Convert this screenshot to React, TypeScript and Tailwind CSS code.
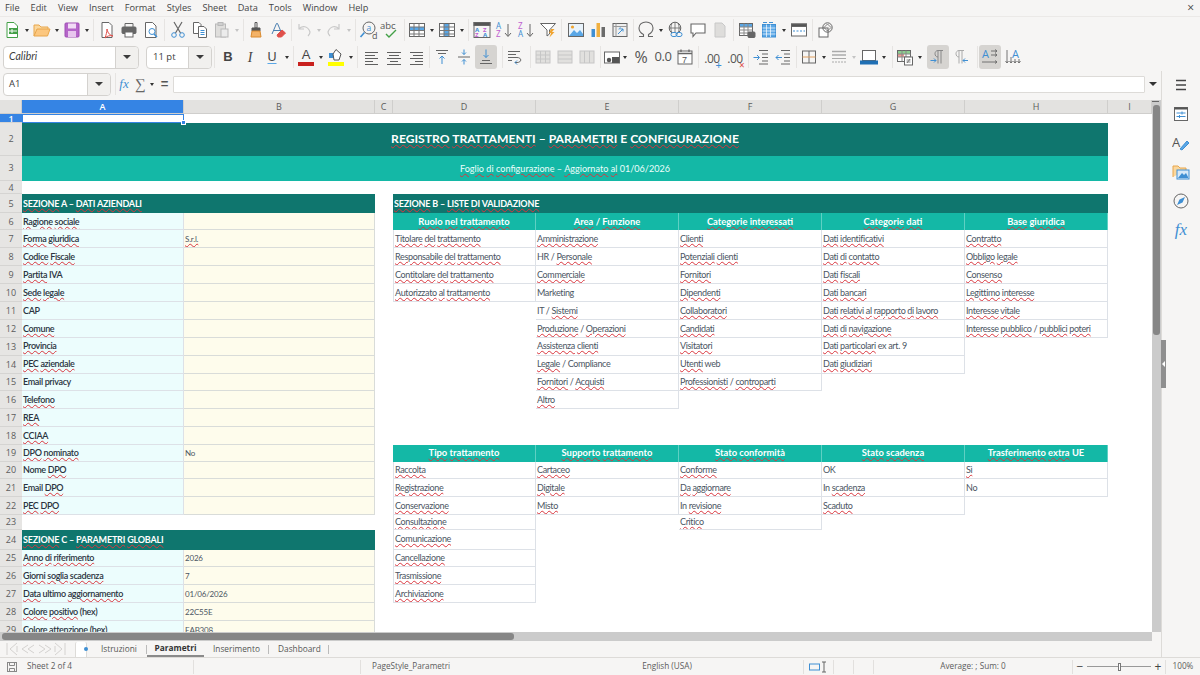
import React from "react";

const ui = "font-['Open_Sans','Noto_Sans',sans-serif]";
const sheetFont = "font-['Lato','Liberation_Sans',sans-serif]";

const NOSPELL = new Set(["HR","IT","/","Marketing","web","Compliance","ex","art.","9","–","A","B","C","E","UE","In","Email","privacy","CAP","IVA","Nome","OK","No","01/06/2026","(hex)","ultimo","2026","7","22C55E","EAB308"]);

function T({ s }: { s: string }) {
  const parts = s.split(" ");
  return (
    <span className="whitespace-nowrap">
      {parts.map((w, i) => (
        <React.Fragment key={i}>
          {NOSPELL.has(w) ? <span>{w}</span> : <span className="underline decoration-wavy decoration-[#d9363e] decoration-[0.5px] underline-offset-[1px]">{w}</span>}
          {i < parts.length - 1 ? " " : ""}
        </React.Fragment>
      ))}
    </span>
  );
}

const Sv = ({ children, w = 18, h = 18 }: { children: React.ReactNode; w?: number; h?: number }) => (
  <svg width={w} height={h} viewBox={`0 0 ${w} ${h}`} fill="none" stroke="#666" strokeWidth="1">{children}</svg>
);

const Btn = ({ children, active }: { children?: React.ReactNode; active?: boolean }) => (
  <div className={`w-[22px] h-[24px] shrink-0 flex items-center justify-center rounded-[3px] ${active ? "bg-[#d6d4d1]" : ""}`}>{children}</div>
);
const Dd = ({ faint }: { faint?: boolean }) => (
  <div className="w-[8px] shrink-0 flex items-center justify-center">
    <div className={`w-0 h-0 border-x-[2.5px] border-x-transparent border-t-[3px] ${faint ? "border-t-[#c4c4c4]" : "border-t-[#333]"}`} />
  </div>
);
const Sep = () => (
  <div className="w-[4px] h-[22px] shrink-0 flex justify-center"><div className="w-px h-full bg-[#e6e4e2]" /></div>
);
const Gap = ({ w }: { w: "1" | "2" | "3" }) => (
  <div className={`shrink-0 ${w === "1" ? "w-[1px]" : w === "2" ? "w-[2px]" : "w-[3px]"}`} />
);

const Lines = ({ xs, c = "#666" }: { xs: [number, number][]; c?: string }) => (
  <g stroke={c}>{xs.map(([a, b], i) => <path key={i} d={`M${a} ${4 + i * 3}.5H${b}`} />)}</g>
);

const Grid = ({ head, col, light }: { head?: boolean; col?: boolean; light?: boolean }) => (
  <Sv>
    <rect x="1.5" y="2.5" width="15" height="13" stroke={light ? "#bdbdbd" : "#666"} fill={light ? "#e2e1df" : "#fff"} />
    {head && <rect x="2" y="6" width="14" height="3.5" fill="#5aa7e6" stroke="none" />}
    {col && <rect x="6" y="3" width="5" height="12" fill="#5aa7e6" stroke="none" />}
    <path d="M1.5 6H16.5M1.5 9.5H16.5M1.5 13H16.5M6 2.5V15.5M11 2.5V15.5" stroke={light ? "#bdbdbd" : "#777"} />
  </Sv>
);

function Toolbar1() {
  return (
    <div className="h-[26px] flex items-center pl-[1px]">
      <Btn><Sv><path d="M4 1.5H11L14.5 5V16.5H4Z" stroke="#43a047" fill="#fff" /><rect x="6" y="7" width="8" height="6" fill="#43a047" stroke="none" /><path d="M9 8V12M6 10H14" stroke="#fff" /></Sv></Btn><Dd />
      <Btn><Sv w={20}><path d="M2 15V4H7L9 6H16V8" stroke="#e8a64c" fill="#fbd79c" /><path d="M2 15L5 8H18L15.5 15Z" stroke="#e8a64c" fill="#fcc77f" /></Sv></Btn><Dd />
      <Btn><Sv><rect x="2" y="2" width="14" height="14" rx="1" fill="#b565c9" stroke="#a04fb5" /><rect x="5" y="2.5" width="8" height="5" fill="#f2dcf6" stroke="none" /><rect x="5" y="10" width="8" height="6" fill="#e8c6ee" stroke="none" /></Sv></Btn><Dd />
      <Sep /><Gap w="1" />
      <Btn><Sv><path d="M4 1.5H11L14 4.5V16.5H4Z" fill="#fff" /><path d="M9 8C10 13 12 14 15 15C12 14 9 15 7 17C8 14 9 11 9 8Z" stroke="#e0504a" /></Sv></Btn>
      <Btn><Sv><path d="M5 6V2.5H13V6" /><rect x="2" y="6" width="14" height="6.5" rx="1" fill="#666" /><rect x="5" y="11" width="8" height="5" fill="#fff" /></Sv></Btn>
      <Btn><Sv><path d="M3.5 1.5H10.5L14 5V16.5H3.5Z" fill="#fff" /><circle cx="10" cy="10.5" r="3" stroke="#3f8fd3" /><path d="M12 13L15 16" stroke="#3f8fd3" strokeWidth="1.5" /></Sv></Btn>
      <Sep /><Gap w="1" />
      <Btn><Sv><path d="M5 1L11.5 12M13 1L6.5 12" strokeWidth="1.2" /><circle cx="5" cy="14" r="2.3" stroke="#3f8fd3" /><circle cx="13" cy="14" r="2.3" stroke="#3f8fd3" /></Sv></Btn>
      <Btn><Sv><path d="M2.5 1.5H8L10 3.5V12.5H2.5Z" fill="#fff" /><path d="M7.5 5.5H13L15.5 8V16.5H7.5Z" fill="#fff" /><path d="M9.5 9.5H13.5M9.5 11.5H13.5M9.5 13.5H13.5" stroke="#3f8fd3" /></Sv></Btn>
      <Btn><Sv><rect x="2.5" y="3" width="10" height="13" fill="#dfdedc" stroke="#b9b9b9" /><rect x="5" y="1.5" width="5" height="3" fill="#cfcfcf" stroke="#b9b9b9" /><rect x="8" y="8" width="7" height="8" fill="#ececec" stroke="#b9b9b9" /></Sv></Btn><Dd faint />
      <Sep />
      <Btn><Sv><path d="M8 1.5H10V7H8Z" stroke="#555" /><path d="M5 7H13V10H5Z" fill="#555" stroke="#555" /><path d="M5 10H13L14 16H4Z" fill="#f3b267" stroke="#d98a2f" /></Sv></Btn>
      <Btn><Sv><path d="M3 13L7.5 2.5H8.5L13 13M5 9.5H11" stroke="#4a7fb0" /><path d="M8 14L13 9L16.5 12L12.5 16H9Z" fill="#e0504a" stroke="#e0504a" /></Sv></Btn>
      <Sep />
      <Btn><Sv><path d="M4 3V8H9M4 8C7 4 13 5 15 11C15 13 14 14 13 15" stroke="#c8c8c8" strokeWidth="1.2" /></Sv></Btn><Dd faint />
      <Btn><Sv><path d="M14 3V8H9M14 8C11 4 5 5 3 11C3 13 4 14 5 15" stroke="#c8c8c8" strokeWidth="1.2" /></Sv></Btn><Dd faint />
      <Sep /><Gap w="1" />
      <Btn><Sv w={20} h={20}><circle cx="10" cy="8" r="6" stroke="#666" /><path d="M5.5 12.5L1.5 17" stroke="#3f8fd3" strokeWidth="1.6" /><text x="7.5" y="11" fontSize="8.5" fill="#3f8fd3" stroke="none" fontFamily="Open Sans">a</text><text x="13" y="18.5" fontSize="9" fill="#555" stroke="none" fontFamily="Open Sans">d</text></Sv></Btn>
      <Btn><Sv w={22} h={20}><text x="0" y="9" fontSize="9.5" fill="#555" stroke="none" fontFamily="Open Sans">abc</text><path d="M6 14L9 17L16 10" stroke="#43a047" strokeWidth="1.4" /></Sv></Btn>
      <Sep />
      <Btn><Grid head /></Btn><Dd />
      <Btn><Grid col /></Btn><Dd />
      <Sep /><Gap w="1" />
      <Btn><Sv><rect x="1" y="1.5" width="16" height="15" /><rect x="1" y="1.5" width="16" height="3" fill="#555" /><text x="2" y="10.5" fontSize="6" fill="#3f8fd3" stroke="none" fontWeight="700">A</text><text x="2" y="16" fontSize="6" fill="#c060d0" stroke="none" fontWeight="700">Z</text><text x="10" y="10.5" fontSize="6" fill="#c060d0" stroke="none" fontWeight="700">Z</text><text x="10" y="16" fontSize="6" fill="#3f8fd3" stroke="none" fontWeight="700">A</text></Sv></Btn>
      <Btn><Sv><text x="1" y="8" fontSize="8" fill="#3f8fd3" stroke="none">A</text><text x="1" y="16" fontSize="8" fill="#c060d0" stroke="none">Z</text><path d="M13 3V15M10 12L13 15.5L16 12" /></Sv></Btn>
      <Btn><Sv><text x="1" y="8" fontSize="8" fill="#c060d0" stroke="none">Z</text><text x="1" y="16" fontSize="8" fill="#3f8fd3" stroke="none">A</text><path d="M13 3V15M10 12L13 15.5L16 12" /></Sv></Btn>
      <Btn><Sv><path d="M1.5 2.5H16.5L10.5 9V13L8 15V9Z" fill="#fff" /><path d="M12 8L15.5 8L13 11H15.5L10.5 16.5L12 12H10Z" fill="#f0a430" stroke="none" /></Sv></Btn>
      <Sep /><Gap w="2" />
      <Btn><Sv><rect x="1.5" y="2.5" width="15" height="13" fill="#e9f3fb" /><circle cx="5.5" cy="6" r="1.6" fill="#f0a430" stroke="none" /><path d="M2 15L7 9L10 12L13 9L16 13V15Z" fill="#5aa7e6" stroke="none" /></Sv></Btn>
      <Btn><Sv><rect x="2.5" y="8" width="3.5" height="8" fill="#3f8fd3" stroke="none" /><rect x="7.5" y="2" width="3.5" height="14" fill="#f0b040" stroke="none" /><rect x="12.5" y="6" width="3.5" height="10" fill="#6b6b6b" stroke="none" /></Sv></Btn>
      <Btn><Sv><rect x="2" y="2.5" width="14" height="13" fill="#efefef" /><path d="M2 5.5H16M5 2.5V15.5" stroke="#999" /><path d="M7 13L12 8M12 8H9.5M12 8V10.5M8 8.5C8 7 9 7 10 7" stroke="#3f8fd3" /></Sv></Btn>
      <Sep />
      <Btn><Sv w={20} h={20}><path d="M3 16.5H7.5V14.5C4.5 13 3 10.5 3 8C3 4.5 6 2 10 2C14 2 17 4.5 17 8C17 10.5 15.5 13 12.5 14.5V16.5H17" strokeWidth="1.1" /></Sv></Btn><Dd />
      <Btn><Sv><circle cx="8" cy="7" r="5.8" /><path d="M2.2 7H13.8M8 1.2V12.8M5 2C3.5 6 3.5 8 5 12M11 2C12.5 6 12.5 8 11 12" strokeWidth="0.8" /><rect x="4" y="11.5" width="6" height="4" rx="2" stroke="#3f8fd3" fill="#f6f5f4" /><rect x="9" y="11.5" width="6" height="4" rx="2" stroke="#3f8fd3" /></Sv></Btn>
      <Btn><Sv><path d="M2 3H16V12H7L4 15.5V12H2Z" fill="#fff" strokeWidth="1.1" /></Sv></Btn>
      <Btn><Sv><path d="M4 2H11L14 5V16H4Z" fill="#dedddb" stroke="#c8c8c8" /></Sv></Btn>
      <Sep /><Gap w="1" />
      <Btn><Sv><rect x="1.5" y="2.5" width="13" height="12" fill="#fff" /><rect x="2" y="3" width="12" height="3" fill="#5aa7e6" stroke="none" /><path d="M1.5 6H14.5M1.5 9H14.5M1.5 12H14.5M6 2.5V14.5M10 2.5V14.5" stroke="#888" /><rect x="10" y="11" width="7" height="5.5" rx="1" fill="#666" /></Sv></Btn>
      <Btn><Sv><rect x="2.5" y="3.5" width="13" height="12.5" fill="#5aa7e6" stroke="#3f8fd3" /><path d="M2.5 7H15.5M2.5 10H15.5M2.5 13H15.5M6.5 3.5V16M10.5 3.5V16" stroke="#fff" strokeWidth=".7" /><path d="M3 1.5H7M9 1.5H13" stroke="#3f8fd3" /></Sv></Btn><Dd />
      <Btn><Sv><rect x="1.5" y="3" width="15" height="12" fill="#fff" /><rect x="1.5" y="3" width="15" height="2.5" fill="#555" /><path d="M3 10H15" stroke="#3f8fd3" strokeDasharray="2 1.5" /></Sv></Btn>
      <Sep /><Gap w="1" />
      <Btn><Sv><rect x="2" y="7" width="9" height="9" fill="#fff" /><circle cx="10.5" cy="6.5" r="4.7" /><path d="M10.5 3L14 6.5L10.5 10L7 6.5Z" strokeWidth=".8" /></Sv></Btn>
    </div>
  );
}

const ComboBtn = () => (
  <div className="w-[23px] self-stretch bg-[#f1f0ee] border-l border-[#d4d2cf] rounded-r-[4px] flex items-center justify-center">
    <div className="w-0 h-0 border-x-[4px] border-x-transparent border-t-[4.5px] border-t-[#3b3b3b]" />
  </div>
);

const AlignIcon = ({ xs }: { xs: [number, number][] }) => (
  <Sv><Lines xs={xs} c="#5f5f5f" /></Sv>
);

const Cell3 = ({ v, h }: { v?: boolean; h?: boolean }) => (
  <Sv><rect x="2" y="3" width="14" height="12" fill="#e1e0de" stroke="#c6c6c6" /><path d={`${h ? "M2 7H16M2 11H16" : ""}${v ? "M6.5 3V15M11.5 3V15" : ""}`} stroke="#c6c6c6" /></Sv>
);

function Toolbar2() {
  return (
    <div className="h-[28px] flex items-center">
      <div className="w-[3px] shrink-0" />
      <div className={`w-[136px] h-[23px] shrink-0 bg-white border border-[#d4d2cf] rounded-[4px] flex items-center ${sheetFont}`}>
        <div className="flex-1 pl-[5px] text-[10.5px] italic text-[#3d3d3d]">Calibri</div><ComboBtn />
      </div>
      <div className="w-[7px] shrink-0" />
      <div className={`w-[66px] h-[23px] shrink-0 bg-white border border-[#d4d2cf] rounded-[4px] flex items-center ${ui}`}>
        <div className="flex-1 pl-[6px] text-[9.5px] text-[#3d3d3d]">11 pt</div><ComboBtn />
      </div>
      <Sep /><Gap w="1" />
      <Btn><span className="font-['Liberation_Sans'] font-bold text-[13px] text-[#444]">B</span></Btn>
      <Btn><span className="font-['Liberation_Serif'] italic text-[14px] text-[#444]">I</span></Btn>
      <Btn><span className="font-['Liberation_Sans'] text-[12.5px] text-[#444] underline decoration-[#5aa7e6] underline-offset-2">U</span></Btn><Dd />
      <Sep />
      <Btn><div className="flex flex-col items-center"><span className="font-['Liberation_Sans'] text-[13px] leading-[12px] text-[#444]">A</span><div className="w-[16px] h-[4px] mt-[1px] bg-[#c9211e]" /></div></Btn><Dd />
      <Btn><Sv><rect x="1" y="14" width="16" height="4" fill="#ffff00" stroke="none" /><path d="M2 5H7V10H2Z" fill="#3f8fd3" stroke="none" /><path d="M6 6L9 1.5L14 6L12 12H7Z" fill="#fff" stroke="#555" /></Sv></Btn><Dd />
      <Sep /><Gap w="2" />
      <Btn><AlignIcon xs={[[2,15],[2,12],[2,15],[2,10],[2,15]]} /></Btn>
      <Btn><AlignIcon xs={[[2,16],[4,14],[2,16],[5,13],[2,16]]} /></Btn>
      <Btn><AlignIcon xs={[[3,16],[6,16],[3,16],[8,16],[3,16]]} /></Btn>
      <Sep />
      <Btn><Sv><path d="M3 2.5H15M5 5.5H13" /><path d="M9 16V8M6.5 10.5L9 8L11.5 10.5" stroke="#3f8fd3" /></Sv></Btn>
      <Btn><Sv><path d="M3 9H15" /><path d="M9 1.5V6.5M7 4.5L9 6.5L11 4.5M9 16.5V11.5M7 13.5L9 11.5L11 13.5" stroke="#3f8fd3" /></Sv></Btn>
      <Btn active><Sv><path d="M9 1.5V9.5M6.5 7L9 9.5L11.5 7" stroke="#3f8fd3" /><path d="M5 12.5H13M3 15.5H15" /></Sv></Btn>
      <Gap w="3" /><Sep />
      <Btn><Sv><path d="M2 3.5H14M2 6.5H10M2 9.5H11C16 9.5 16 14.5 11 14.5H9M2 12.5H6" /><path d="M11 12.5L9 14.5L11 16.5" stroke="#3f8fd3" /></Sv></Btn>
      <Gap w="2" /><Sep />
      <Btn><Cell3 h v /></Btn>
      <Btn><Cell3 h /></Btn>
      <Btn><Cell3 v /></Btn>
      <Sep />
      <div className="w-[19px] shrink-0 flex justify-center"><Sv w={18}><rect x="1.5" y="4" width="15" height="11" fill="#fff" /><circle cx="6" cy="12" r="2.2" fill="#555" stroke="none" /><rect x="9" y="9" width="7" height="6" fill="#555" stroke="none" /></Sv></div><Dd />
      <Gap w="1" />
      <Btn><span className={`${ui} text-[16px] text-[#555]`}>%</span></Btn>
      <Btn><span className={`${ui} text-[13px] tracking-[-0.5px] text-[#555]`}>0.0</span></Btn>
      <Btn><Sv><rect x="2" y="3" width="14" height="13" fill="#fff" /><path d="M2 5.5H16M5 1.5V4M13 1.5V4" strokeWidth="1.3" /><text x="6" y="14.5" fontSize="9" fill="#555" stroke="none" fontFamily="Liberation Sans">7</text></Sv></Btn>
      <Sep /><Gap w="1" />
      <Btn><span className="relative"><span className={`${ui} text-[12px] tracking-[-0.5px] text-[#555]`}>.00</span><span className="absolute -right-[2px] bottom-0 text-[11px] leading-[8px] text-[#3f8fd3]">+</span></span></Btn>
      <Gap w="1" />
      <Btn><span className="relative"><span className={`${ui} text-[12px] tracking-[-0.5px] text-[#555]`}>.00</span><span className="absolute -right-[2px] bottom-0 text-[10px] leading-[8px] text-[#e0504a]">×</span></span></Btn>
      <Sep />
      <Btn><Sv><path d="M7 2.5H16M10 6H16M10 9.5H16M10 13H16M7 16H16" /><path d="M1.5 9.5H7M5 7L7.5 9.5L5 12" stroke="#3f8fd3" /></Sv></Btn>
      <Btn><Sv><path d="M7 2.5H16M10 6H16M10 9.5H16M10 13H16M7 16H16" /><path d="M8 9.5H2M4.5 7L2 9.5L4.5 12" stroke="#3f8fd3" /></Sv></Btn>
      <Sep />
      <Btn><Sv><rect x="2.5" y="3" width="13" height="12" /><path d="M9 3V15" /><path d="M2.5 9H15.5" stroke="#e0a060" /></Sv></Btn><Dd />
      <Btn><Sv><path d="M2 3.5H16M2 7H16" stroke="#aaa" strokeWidth="1.4" /><path d="M2 10.5H16" stroke="#aaa" /><path d="M2 14H16" stroke="#aaa" strokeDasharray="2 1" /></Sv></Btn><Dd faint />
      <Btn><Sv w={20}><rect x="3.5" y="2.5" width="13" height="10" fill="#fff" /><rect x="1" y="12.5" width="18" height="4" fill="#1f6fb4" stroke="none" /></Sv></Btn><Dd />
      <Gap w="2" /><Sep />
      <Btn><Sv><rect x="1.5" y="2.5" width="13" height="11" fill="#fff" /><rect x="2" y="3" width="12" height="3" fill="#8ccf90" stroke="none" /><rect x="2" y="6" width="6" height="3" fill="#ef9a94" stroke="none" /><path d="M1.5 6H14.5M1.5 9H14.5M6 2.5V13.5M10 2.5V13.5" stroke="#888" /><rect x="8.5" y="9" width="8" height="8" fill="#fff" /><path d="M10.5 12H14.5M10.5 14H14.5M11 15L14 11" strokeWidth=".8" /></Sv></Btn><Dd />
      <Gap w="3" />
      <Btn active><Sv><path d="M9 15.5V2.5H14M12 15.5V2.5M9 2.5C5 2.5 5 9 9 9" stroke="#888" /><path d="M1.5 12.5H7M5 10.5L7 12.5L5 14.5" stroke="#3f8fd3" /></Sv></Btn>
      <Gap w="1" />
      <Btn><Sv><path d="M7 15.5V2.5H12M10 15.5V2.5M7 2.5C3 2.5 3 9 7 9" stroke="#aaa" /><path d="M16 12.5H11M13 10.5L11 12.5L13 14.5" stroke="#3f8fd3" /></Sv></Btn>
      <Gap w="3" /><Sep />
      <Btn active><Sv><text x="1" y="10" fontSize="11" fill="#3f8fd3" stroke="none" fontFamily="Open Sans">A</text><path d="M10 3H16M14 1.5L16 3L14 4.5M10 7H16M14 5.5L16 7L14 8.5M1 14H16M14 12.5L16 14L14 15.5" strokeWidth=".9" /></Sv></Btn>
      <Gap w="1" />
      <Btn><Sv><text x="8" y="10" fontSize="11" fill="#3f8fd3" stroke="none" fontFamily="Open Sans">A</text><path d="M3 2V15M1.5 13L3 15L4.5 13M7 9V15M5.5 13L7 15L8.5 13M11 11V15M9.5 13L11 15L12.5 13M15 11V15M13.5 13L15 15L16.5 13" strokeWidth=".9" /></Sv></Btn>
    </div>
  );
}

function FormulaBar() {
  return (
    <div className="h-[29px] pb-[3px] flex items-center">
      <div className="w-[3px] shrink-0" />
      <div className={`w-[108px] h-[23px] shrink-0 bg-white border border-[#d4d2cf] rounded-[4px] flex items-center ${ui}`}>
        <div className="flex-1 pl-[5px] text-[9.5px] text-[#3d3d3d]">A1</div><ComboBtn />
      </div>
      <div className="w-[2px] shrink-0" /><Sep />
      <div className="w-[14px] flex justify-center shrink-0"><span className="font-['Liberation_Serif'] italic text-[13px] text-[#3f8fd3]">fx</span></div>
      <div className="w-[4px] shrink-0" />
      <div className="w-[10px] flex justify-center shrink-0"><span className="font-['Liberation_Serif'] text-[15px] text-[#666]">∑</span></div>
      <div className="w-[3px] shrink-0" />
      <Dd />
      <div className="w-[17px] flex justify-center shrink-0"><span className="font-['Liberation_Sans'] text-[13px] font-bold text-[#555]">=</span></div>
      <div className="w-[972px] h-[17px] shrink-0 bg-white border border-[#dddbd8] rounded-[1px]" />
      <div className="flex-1 flex justify-center">
        <div className="w-0 h-0 border-x-[4px] border-x-transparent border-t-[4.5px] border-t-[#333]" />
      </div>
    </div>
  );
}

const RH = ({ n, sel }: { n: number; sel?: boolean }) => (
  <div className={`${ui} flex items-center justify-center text-[9px] leading-none border-b border-[#d5d4d2] overflow-hidden ${sel ? "bg-[#3584e4] text-white font-semibold" : "bg-[#e6e5e3] text-[#5c5c5c]"}`}>{n}</div>
);
const CH = ({ t, sel }: { t: string; sel?: boolean }) => (
  <div className={`${ui} flex items-center justify-center text-[9px] leading-none border-r border-b border-[#cfcecc] ${sel ? "bg-[#3584e4] text-white font-semibold" : "bg-[#e3e2e0] text-[#5c5c5c]"}`}>{t}</div>
);

const border = "border-r border-b border-[#dde1e7]";
const Blank = () => <div />;
const Label = ({ t }: { t?: string }) => (
  <div className={`bg-[#ecfdfd] ${border} pl-[1px] flex items-center overflow-hidden text-[9px] tracking-[-0.35px] font-semibold text-[#2a3340] ${sheetFont}`}>{t && <T s={t} />}</div>
);
const Value = ({ t }: { t?: string }) => (
  <div className={`bg-[#fefcec] border-r border-b border-[#d9dcd9] pl-[1px] flex items-center overflow-hidden text-[8px] tracking-[-0.2px] text-[#4b5563] ${sheetFont}`}>{t && <T s={t} />}</div>
);
const Sec = ({ t, span5 }: { t: string; span5?: boolean }) => (
  <div className={`${span5 ? "col-span-5" : "col-span-2"} bg-[#0f766e] pl-[1px] flex items-center text-[9px] font-bold tracking-[-0.2px] text-white ${sheetFont}`}><T s={t} /></div>
);
const Head = ({ t }: { t: string }) => (
  <div className={`bg-[#14b8a6] border-r border-[#5fd0c3] flex items-center justify-center text-[9.4px] font-bold text-white ${sheetFont}`}><T s={t} /></div>
);
const Item = ({ t, left }: { t: string; left?: boolean }) => (
  <div className={`bg-white ${border} ${left ? "border-l" : ""} pl-[1px] flex items-center overflow-hidden text-[9px] tracking-[-0.35px] text-[#4b5563] ${sheetFont}`}><T s={t} /></div>
);

type Row = { n: number; a?: string; b?: string; cols?: (string | undefined)[] };

const rowsA: Row[] = [
  { n: 7, a: "Forma giuridica", b: "S.r.l.", cols: ["Titolare del trattamento", "Amministrazione", "Clienti", "Dati identificativi", "Contratto"] },
  { n: 8, a: "Codice Fiscale", cols: ["Responsabile del trattamento", "HR / Personale", "Potenziali clienti", "Dati di contatto", "Obbligo legale"] },
  { n: 9, a: "Partita IVA", cols: ["Contitolare del trattamento", "Commerciale", "Fornitori", "Dati fiscali", "Consenso"] },
  { n: 10, a: "Sede legale", cols: ["Autorizzato al trattamento", "Marketing", "Dipendenti", "Dati bancari", "Legittimo interesse"] },
  { n: 11, a: "CAP", cols: [undefined, "IT / Sistemi", "Collaboratori", "Dati relativi al rapporto di lavoro", "Interesse vitale"] },
  { n: 12, a: "Comune", cols: [undefined, "Produzione / Operazioni", "Candidati", "Dati di navigazione", "Interesse pubblico / pubblici poteri"] },
  { n: 13, a: "Provincia", cols: [undefined, "Assistenza clienti", "Visitatori", "Dati particolari ex art. 9"] },
  { n: 14, a: "PEC aziendale", cols: [undefined, "Legale / Compliance", "Utenti web", "Dati giudiziari"] },
  { n: 15, a: "Email privacy", cols: [undefined, "Fornitori / Acquisti", "Professionisti / controparti"] },
  { n: 16, a: "Telefono", cols: [undefined, "Altro"] },
  { n: 17, a: "REA" },
  { n: 18, a: "CCIAA" },
];
const rowsB: Row[] = [
  { n: 20, a: "Nome DPO", cols: ["Raccolta", "Cartaceo", "Conforme", "OK", "Sì"] },
  { n: 21, a: "Email DPO", cols: ["Registrazione", "Digitale", "Da aggiornare", "In scadenza", "No"] },
  { n: 22, a: "PEC DPO", cols: ["Conservazione", "Misto", "In revisione", "Scaduto"] },
];
const rowsC: Row[] = [
  { n: 25, a: "Anno di riferimento", b: "2026", cols: ["Cancellazione"] },
  { n: 26, a: "Giorni soglia scadenza", b: "7", cols: ["Trasmissione"] },
  { n: 27, a: "Data ultimo aggiornamento", b: "01/06/2026", cols: ["Archiviazione"] },
  { n: 28, a: "Colore positivo (hex)", b: "22C55E" },
  { n: 29, a: "Colore attenzione (hex)", b: "EAB308" },
];

function renderCols(cols?: (string | undefined)[]) {
  return [0, 1, 2, 3, 4].map((i) => {
    const v = cols?.[i];
    return v ? <Item key={i} t={v} left={i === 0} /> : <Blank key={i} />;
  });
}

function Sheet() {
  const dataRow = (r: Row) => (
    <React.Fragment key={r.n}>
      <RH n={r.n} />
      <Label t={r.a} />
      <Value t={r.b} />
      <Blank />
      {renderCols(r.cols)}
      <Blank />
    </React.Fragment>
  );
  return (
    <div className={`w-[1152px] h-[532px] shrink-0 overflow-hidden bg-white grid grid-cols-[22px_162px_191px_18px_143px_143px_143px_143px_143px_44px] grid-rows-[14px_9px_32.7px_25.6px_12.7px_19.3px_17px_repeat(12,17.92px)_16.4px_repeat(3,17.8px)_15px_19.6px_repeat(5,17.9px)]`}>
      <div className="bg-[#e3e2e0] border-r border-b border-[#cfcecc]" />
      <CH t="A" sel /><CH t="B" /><CH t="C" /><CH t="D" /><CH t="E" /><CH t="F" /><CH t="G" /><CH t="H" /><CH t="I" />

      <RH n={1} sel />
      <div className="relative border border-[#3584e4]"><div className="absolute -right-[3px] -bottom-[3px] w-[5px] h-[5px] bg-[#3584e4] border border-white" /></div>
      <div className="col-span-8" />

      <RH n={2} />
      <div className={`col-span-8 bg-[#0f766e] flex items-center justify-center text-[12.15px] font-bold text-white ${sheetFont}`}><T s="REGISTRO TRATTAMENTI – PARAMETRI E CONFIGURAZIONE" /></div>
      <Blank />

      <RH n={3} />
      <div className={`col-span-8 bg-[#14b8a6] flex items-center justify-center text-[9.1px] text-[#eafffb] ${sheetFont}`}><T s="Foglio di configurazione – Aggiornato al 01/06/2026" /></div>
      <Blank />

      <RH n={4} />
      <div className="col-span-9" />

      <RH n={5} />
      <Sec t="SEZIONE A – DATI AZIENDALI" />
      <Blank />
      <Sec span5 t="SEZIONE B – LISTE DI VALIDAZIONE" />
      <Blank />

      <RH n={6} />
      <Label t="Ragione sociale" />
      <Value />
      <Blank />
      {["Ruolo nel trattamento", "Area / Funzione", "Categorie interessati", "Categorie dati", "Base giuridica"].map((h) => <Head key={h} t={h} />)}
      <Blank />

      {rowsA.map(dataRow)}

      <RH n={19} />
      <Label t="DPO nominato" />
      <Value t="No" />
      <Blank />
      {["Tipo trattamento", "Supporto trattamento", "Stato conformità", "Stato scadenza", "Trasferimento extra UE"].map((h) => <Head key={h} t={h} />)}
      <Blank />

      {rowsB.map(dataRow)}

      <RH n={23} />
      <div className="col-span-3" />
      {renderCols(["Consultazione", undefined, "Critico"])}
      <Blank />

      <RH n={24} />
      <Sec t="SEZIONE C – PARAMETRI GLOBALI" />
      <Blank />
      {renderCols(["Comunicazione"])}
      <Blank />

      {rowsC.map(dataRow)}
    </div>
  );
}

function VScroll() {
  return (
    <div className="w-[9px] shrink-0 bg-[#cbcbcb] flex flex-col items-start">
      <div className="w-[7px] h-[1px] mt-[1px] bg-[#666]" />
      <div className="w-[7px] h-[230px] mt-[3px] ml-px rounded-[3px] bg-[#868686]" />
    </div>
  );
}

function Tabs() {
  return (
    <div className={`h-[16px] flex items-center text-[8.3px] text-[#555] ${ui}`}>
      <div className="w-[6px] shrink-0" />
      <svg width="60" height="14" viewBox="0 0 60 14" fill="none" stroke="#d4d2d0" strokeWidth="1" className="shrink-0">
        <path d="M1 1V13M11 1L4 7L11 13M11 4V10M22 3L16 7L22 11M28 3L22 7L28 11M33 3L39 7L33 11M39 3L45 7L39 11M49 1L56 7L49 13M49 4V10M59 1V13" />
      </svg>
      <div className="w-[9px] shrink-0" />
      <div className="w-[12px] h-[15px] shrink-0 bg-white border-l border-r border-[#dddbd8] rounded-t-[2px] flex items-center justify-center" />
      <div className="w-[4px] h-[4px] -ml-[3px] shrink-0 rounded-full bg-[#3f8fd3]" />
      <div className="w-[13px] shrink-0" />
      <div className="w-[45px] shrink-0">Istruzioni</div>
      <div className="w-px h-[9px] shrink-0 bg-[#bbb]" />
      <div className="w-[57px] h-full shrink-0 flex items-center justify-center font-bold text-[#333] border-b-[2px] border-[#8a8a8a]">Parametri</div>
      <div className="w-[9px] shrink-0" />
      <div className="w-[55px] shrink-0">Inserimento</div>
      <div className="w-px h-[9px] shrink-0 bg-[#bbb]" />
      <div className="w-[9px] shrink-0" />
      <div className="w-[50px] shrink-0">Dashboard</div>
      <div className="w-px h-[9px] shrink-0 bg-[#bbb]" />
    </div>
  );
}

function Sidebar() {
  return (
    <div className="w-[39px] shrink-0 border-l border-[#dddbd8] flex flex-col items-center pt-[5px] gap-[11px]">
      <Sv><path d="M4 4.5H14M4 9H14M4 13.5H14" stroke="#444" strokeWidth="1.5" /></Sv>
      <Sv><rect x="2.5" y="2.5" width="13" height="13" fill="#fff" stroke="#666" /><rect x="2.5" y="2.5" width="13" height="2" fill="#555" stroke="none" /><path d="M4.5 8H13.5M4.5 11.5H13.5" stroke="#3f8fd3" /><path d="M10 6.5V9.5M7.5 10V13" stroke="#3f8fd3" /></Sv>
      <Sv><text x="0" y="13" fontSize="13" fill="#555" stroke="none" fontFamily="Open Sans">A</text><path d="M8 15L15 7L17 9L10 16Z" fill="#5aa7e6" stroke="#3f8fd3" /></Sv>
      <Sv><path d="M1 14V3H6L8 5H14V7" stroke="#e8a64c" fill="#fbd79c" /><rect x="5" y="7" width="12" height="9" fill="#d7e9f8" stroke="#3f8fd3" /><path d="M6 15L10 10L12 12L14 10L16 14V15Z" fill="#3f8fd3" stroke="none" /></Sv>
      <Sv><circle cx="9" cy="9" r="7" stroke="#666" /><path d="M13 5L10.5 10.5L5 13L7.5 7.5Z" fill="#3f8fd3" stroke="none" /></Sv>
      <span className="font-['Liberation_Serif'] italic text-[17px] leading-[18px] text-[#3f8fd3]">fx</span>
    </div>
  );
}

function StatusBar() {
  const V = () => <div className="w-px h-[14px] shrink-0 bg-[#e2e0de]" />;
  return (
    <div className={`h-[18px] border-t border-[#dddbd8] flex items-center text-[8.2px] text-[#5c5c5c] ${ui}`}>
      <div className="w-[24px] shrink-0 flex justify-center">
        <svg width="12" height="12" viewBox="0 0 12 12" fill="none" stroke="#888"><rect x="1.5" y="1.5" width="9" height="9" /><path d="M3.5 1.5V4.5H8.5V1.5M3.5 10.5V7.5H8.5V10.5" /></svg>
      </div>
      <div className="w-[169px] shrink-0 pl-[3px]">Sheet 2 of 4</div><V />
      <div className="w-[166px] shrink-0" /><V />
      <div className="w-[245px] shrink-0 pl-[11px]">PageStyle_Parametri</div>
      <div className="w-[122px] shrink-0 text-center">English (USA)</div>
      <div className="w-[75px] shrink-0" />
      <V />
      <div className="w-[29px] shrink-0 flex justify-center items-center gap-[1px]">
        <svg width="20" height="12" viewBox="0 0 20 12" fill="none"><rect x="0.5" y="3" width="10" height="6" stroke="#3f8fd3" /><path d="M15 1V11M13 1H17M13 11H17" stroke="#666" /></svg>
      </div>
      <V /><div className="w-[19px] shrink-0" /><V /><div className="w-[19px] shrink-0" /><V />
      <div className="w-[198px] shrink-0 text-center">Average: ; Sum: 0</div>
      <V />
      <div className="w-[14px] shrink-0 text-center text-[12px] leading-none text-[#444]">−</div>
      <div className="w-[64px] shrink-0 relative h-[10px] flex items-center">
        <div className="w-full h-px bg-[#999]" />
        <div className="absolute left-[31px] w-[3px] h-[8px] bg-white border border-[#777]" />
      </div>
      <div className="w-[14px] shrink-0 text-center text-[12px] leading-none text-[#444]">+</div>
      <V />
      <div className="flex-1 text-center">100%</div>
    </div>
  );
}

export default function App() {
  return (
    <div className="w-[1200px] h-[675px] overflow-hidden bg-[#f6f5f4] flex flex-col relative">
      <div className={`h-[17px] shrink-0 flex items-center pl-[5px] gap-[11px] text-[9.2px] text-[#444] border-b border-[#ebe9e7] ${ui}`}>
        {["File", "Edit", "View", "Insert", "Format", "Styles", "Sheet", "Data", "Tools", "Window", "Help"].map((m) => <span key={m}>{m}</span>)}
        <span className="ml-auto mr-[6px] text-[12px] leading-none text-[#444]">×</span>
      </div>
      <Toolbar1 />
      <Toolbar2 />
      <div className="flex flex-1 min-h-0">
        <div className="w-[1161px] shrink-0 flex flex-col">
          <FormulaBar />
          <div className="flex h-[532px] shrink-0">
            <Sheet />
            <VScroll />
          </div>
          <div className="h-[9px] shrink-0 flex">
            <div className="w-[1152px] bg-[#cbcbcb] flex items-center pl-[2px]">
              <div className="w-[512px] h-[7px] rounded-[3px] bg-[#868686]" />
            </div>
          </div>
          <Tabs />
        </div>
        <Sidebar />
      </div>
      <StatusBar />
      <div className="absolute left-[1161px] top-[340px] w-[5px] h-[48px] bg-[#8f8f8f] flex items-center justify-center">
        <div className="w-0 h-0 border-y-[3px] border-y-transparent border-r-[3px] border-r-white" />
      </div>
    </div>
  );
}
